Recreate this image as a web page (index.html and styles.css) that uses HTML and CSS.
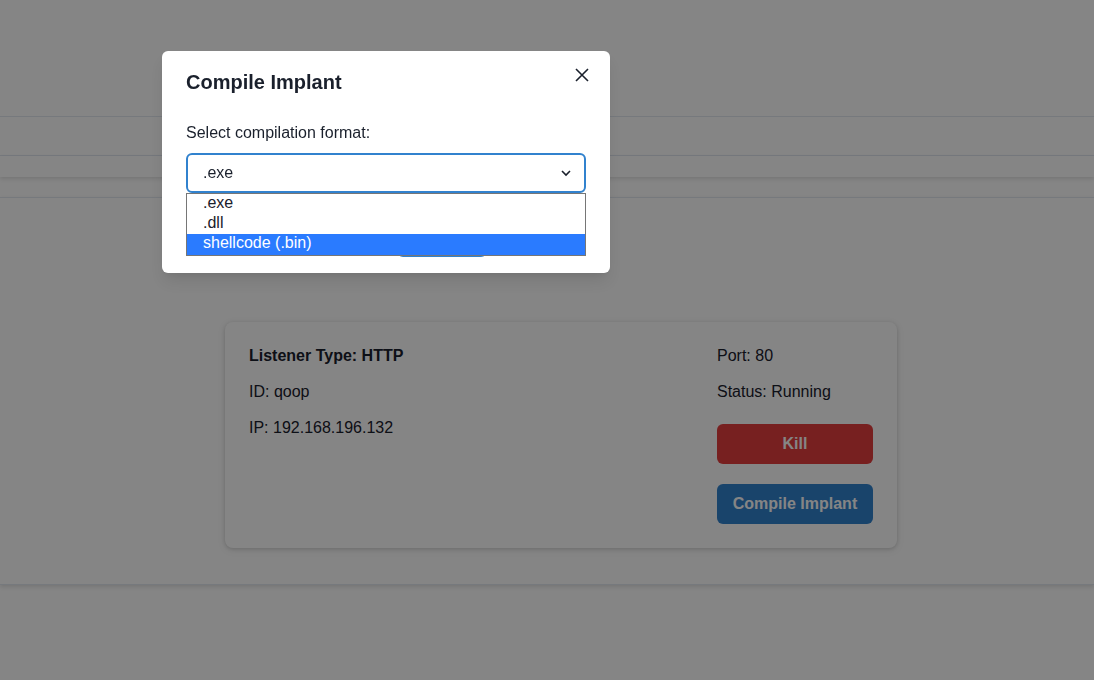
FILE: index.html
```html
<!DOCTYPE html>
<html>
<head>
<meta charset="utf-8">
<link rel="stylesheet" href="styles.css">
</head>
<body>
<div class="page">
  <div class="topbar"></div>
  <div class="tabs"></div>
  <div class="subbar"></div>
  <div class="section">
    <div class="card">
      <div class="info">
        <p class="title">Listener Type: HTTP</p>
        <p>ID: qoop</p>
        <p>IP: 192.168.196.132</p>
      </div>
      <div class="side">
        <p>Port: 80</p>
        <p>Status: Running</p>
        <button class="btn btn-red">Kill</button>
        <button class="btn btn-blue">Compile Implant</button>
      </div>
    </div>
  </div>
</div>
<div class="overlay"></div>
<div class="modal">
  <button class="close" aria-label="Close">
    <svg width="14" height="14" viewBox="0 0 14 14"><path d="M1 1L13 13M13 1L1 13" stroke="#1a202c" stroke-width="1.6" fill="none"/></svg>
  </button>
  <header class="mhead">Compile Implant</header>
  <div class="mbody">
    <p class="label">Select compilation format:</p>
    <div class="select">
      <span>.exe</span>
      <svg width="12" height="8" viewBox="0 0 12 8"><path d="M2 2l4 4 4-4" stroke="#1a202c" stroke-width="1.6" fill="none"/></svg>
      <ul class="options">
        <li>.exe</li>
        <li>.dll</li>
        <li class="sel">shellcode (.bin)</li>
      </ul>
    </div>
  </div>
  <footer class="mfoot">
    <button class="btn btn-blue small">Compile</button>
  </footer>
</div>
</body>
</html>
```

FILE: styles.css
```css
* { box-sizing: border-box; }
html, body { margin: 0; padding: 0; }
body {
  font-family: "Liberation Sans", Arial, sans-serif;
  font-size: 16px;
  color: #1a202c;
  background: #fff;
  width: 1094px;
  height: 680px;
  overflow: hidden;
  position: relative;
}
p { margin: 0; }
.topbar { height: 117px; border-bottom: 1px solid #e2e8f0; }
.tabs { height: 39px; border-bottom: 1px solid #e2e8f0; }
.subbar { height: 21px; box-shadow: 0 2px 4px rgba(0,0,0,0.12); background: #fff; }
.section {
  margin-top: 20px;
  border-top: 1px solid #e2e8f0;
  height: 388px;
  padding: 124px 0 0 225px;
  border-bottom: 1px solid #e2e8f0;
  box-shadow: 0 2px 4px rgba(0,0,0,0.12);
}
.card {
  width: 672px;
  height: 226px;
  background: #fff;
  border-radius: 8px;
  box-shadow: 0 1px 4px rgba(0,0,0,0.15), 0 2px 8px rgba(0,0,0,0.08);
  padding: 22px 24px 24px;
  display: flex;
  justify-content: space-between;
}
.info, .side { display: flex; flex-direction: column; gap: 12px; }
.info p, .side p { line-height: 24px; }
.title { font-weight: 700; }
.side { width: 156px; }
.btn {
  height: 40px;
  border: none;
  border-radius: 6px;
  color: #fff;
  font-family: inherit;
  font-size: 16px;
  font-weight: 700;
  padding: 0 8px;
  white-space: nowrap;
}
.side .btn { width: 156px; }
.side .btn-red { margin-top: 8px; }
.side .btn-blue { margin-top: 8px; }
.btn-red { background: #e53e3e; }
.btn-blue { background: #3182ce; }
.overlay {
  position: fixed;
  inset: 0;
  background: rgba(0,0,0,0.48);
}
.modal {
  position: absolute;
  left: 162px;
  top: 51px;
  width: 448px;
  background: #fff;
  border-radius: 6px;
  box-shadow: 0 10px 15px -3px rgba(0,0,0,0.1), 0 4px 6px -2px rgba(0,0,0,0.05);
}
.close {
  position: absolute;
  top: 8px;
  right: 12px;
  width: 32px;
  height: 32px;
  border: none;
  background: transparent;
  display: flex;
  align-items: center;
  justify-content: center;
  padding: 0;
}
.mhead {
  padding: 16px 24px;
  font-size: 20px;
  font-weight: 700;
  line-height: 30px;
}
.mbody { padding: 8px 24px; }
.label { line-height: 24px; margin-bottom: 8px; }
.select {
  position: relative;
  height: 40px;
  border: 2px solid #3182ce;
  border-radius: 6px;
  display: flex;
  align-items: center;
  justify-content: space-between;
  padding: 0 12px 0 15px;
}
.select span { line-height: 24px; }
.options {
  position: absolute;
  left: -2px;
  right: -2px;
  top: 38px;
  margin: 0;
  padding: 0;
  list-style: none;
  background: #fff;
  border: 1px solid #767676;
  z-index: 2;
}
.options li {
  height: 20px;
  line-height: 18px;
  padding-left: 16px;
}
.options li.sel {
  height: 21px;
  background: #2a7bff;
  color: #fff;
}
.mfoot { padding: 16px 24px; display: flex; }
.small { margin-left: 211px; width: 90px; }
```
